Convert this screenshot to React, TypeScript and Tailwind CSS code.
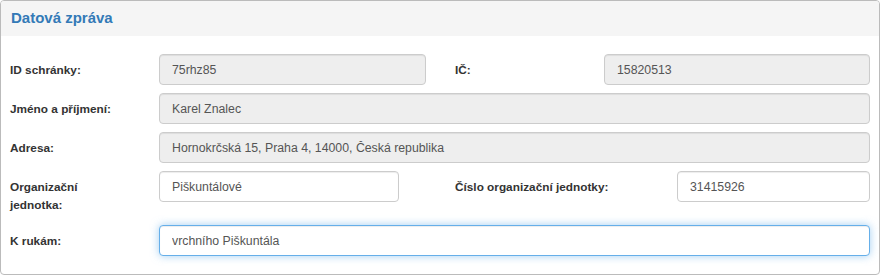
import React from "react";

const font = { fontFamily: '"Liberation Sans", Arial, sans-serif' };

interface IFieldProps {
  value: string;
  readOnly?: boolean;
  focused?: boolean;
  className?: string;
}

const Field = ({ value, readOnly, focused, className = "" }: IFieldProps) => {
  const base =
    "h-[31px] rounded-[4px] border px-3 text-[12.3px] text-[#555] outline-none";
  let tone = "bg-white border-[#ccc] shadow-[inset_0_1px_1px_rgba(0,0,0,0.075)]";
  if (readOnly) {
    tone = "bg-[#eee] border-[#ccc] shadow-[inset_0_1px_1px_rgba(0,0,0,0.075)]";
  }
  if (focused) {
    tone =
      "bg-white border-[#66afe9] shadow-[inset_0_1px_1px_rgba(0,0,0,0.075),0_0_8px_rgba(102,175,233,0.6)]";
  }
  return (
    <input
      className={`${base} ${tone} ${className}`}
      defaultValue={value}
      readOnly={readOnly}
      style={font}
    />
  );
};

const Label = ({
  children,
  className = "w-[149px]",
}: {
  children: React.ReactNode;
  className?: string;
}) => (
  <label
    className={`${className} shrink-0 pt-[7px] text-[11.8px] leading-[18px] font-bold text-[#333] whitespace-nowrap`}
  >
    {children}
  </label>
);

const App = () => {
  return (
    <div className="w-[881px] h-[275px] bg-white" style={font}>
      <div className="w-[880px] h-[275px] border border-[#bbb] rounded-[4px] overflow-hidden">
        <div className="h-[35px] bg-[#f5f5f5] px-[10px] flex items-center">
          <h3 className="text-[15px] font-bold text-[#337ab7]">Datová zpráva</h3>
        </div>
        <div className="pl-[9px] pt-[18px]">
          <div className="flex mb-[8px]">
            <Label>ID schránky:</Label>
            <Field value="75rhz85" readOnly className="w-[267px]" />
            <div className="w-[29px]" />
            <Label>IČ:</Label>
            <Field value="15820513" readOnly className="w-[266px]" />
          </div>
          <div className="flex mb-[8px]">
            <Label>Jméno a příjmení:</Label>
            <Field value="Karel Znalec" readOnly className="w-[711px]" />
          </div>
          <div className="flex mb-[8px]">
            <Label>Adresa:</Label>
            <Field
              value="Hornokrčská 15, Praha 4, 14000, Česká republika"
              readOnly
              className="w-[711px]"
            />
          </div>
          <div className="flex mb-[8px] h-[46px]">
            <Label>
              Organizační
              <br />
              jednotka:
            </Label>
            <Field value="Piškuntálové" className="w-[240px]" />
            <div className="w-[56px]" />
            <Label className="w-[222px]">Číslo organizační jednotky:</Label>
            <Field value="31415926" className="w-[193px]" />
          </div>
          <div className="flex">
            <Label>K rukám:</Label>
            <Field value="vrchního Piškuntála" focused className="w-[711px]" />
          </div>
        </div>
      </div>
    </div>
  );
};

export default App;
